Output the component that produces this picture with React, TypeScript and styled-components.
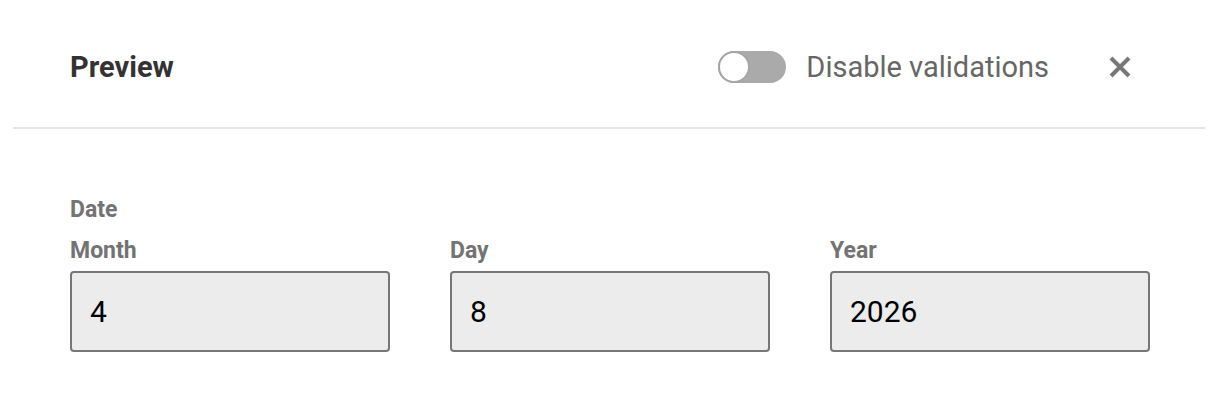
import React from 'react';
import styled, { createGlobalStyle } from 'styled-components';

const GlobalStyle = createGlobalStyle`
    body {
        margin: 0;
        background: #ffffff;
        font-family: Roboto, "Liberation Sans", sans-serif;
    }
`;

const Panel = styled.div`
    width: 1220px;
    padding: 0 15px 0 13px;
    box-sizing: border-box;
`;

const Header = styled.div`
    height: 129px;
    box-sizing: border-box;
    display: flex;
    align-items: center;
    padding: 7px 74px 0 57px;
    border-bottom: 2px solid #e4e4e4;
`;

const Title = styled.h2`
    margin: 0;
    flex: 1;
    font-size: 29px;
    font-weight: 700;
    color: #333333;
`;

const ToggleRow = styled.label`
    display: flex;
    align-items: center;
    gap: 20px;
    font-size: 29px;
    color: #666666;
`;

const Track = styled.span`
    position: relative;
    width: 68px;
    height: 32px;
    border-radius: 16px;
    background: #aaaaaa;
`;

const Knob = styled.span<{ $on?: boolean }>`
    position: absolute;
    top: 0;
    left: ${(p) => (p.$on ? '36px' : '0')};
    width: 32px;
    height: 32px;
    box-sizing: border-box;
    border-radius: 50%;
    background: #ffffff;
    border: 2px solid #a6a6a6;
`;

const CloseButton = styled.button`
    margin-left: 60px;
    padding: 0;
    border: 0;
    background: none;
    width: 22px;
    height: 22px;
    display: flex;
    align-items: center;
    justify-content: center;
    cursor: pointer;
`;

const Body = styled.div`
    padding: 60px 44px 0 57px;
`;

const GroupLabel = styled.div`
    font-size: 23px;
    line-height: 41px;
    font-weight: 700;
    color: #737373;
`;

const Fields = styled.div`
    display: grid;
    grid-template-columns: repeat(3, 320px);
    gap: 60px;
`;

const Field = styled.div`
    display: flex;
    flex-direction: column;
`;

const Input = styled.input`
    height: 81px;
    box-sizing: border-box;
    padding: 0 18px;
    border: 2px solid #777777;
    border-radius: 4px;
    background: #ececec;
    font-family: Roboto, "Liberation Sans", sans-serif;
    font-size: 30px;
    color: #000000;
    outline: none;
`;

const fields = [
    { label: 'Month', value: '4' },
    { label: 'Day', value: '8' },
    { label: 'Year', value: '2026' },
];

const App = () => {
    return (
        <>
            <GlobalStyle />
            <Panel>
                <Header>
                    <Title>Preview</Title>
                    <ToggleRow>
                        <Track>
                            <Knob />
                        </Track>
                        Disable validations
                    </ToggleRow>
                    <CloseButton aria-label="Close">
                        <svg width="22" height="22" viewBox="0 0 22 22">
                            <path d="M2 2 L20 20 M20 2 L2 20" stroke="#777777" strokeWidth="4" />
                        </svg>
                    </CloseButton>
                </Header>
                <Body>
                    <GroupLabel>Date</GroupLabel>
                    <Fields>
                        {fields.map((f) => (
                            <Field key={f.label}>
                                <GroupLabel>{f.label}</GroupLabel>
                                <Input value={f.value} readOnly />
                            </Field>
                        ))}
                    </Fields>
                </Body>
            </Panel>
        </>
    );
};

export default App;
